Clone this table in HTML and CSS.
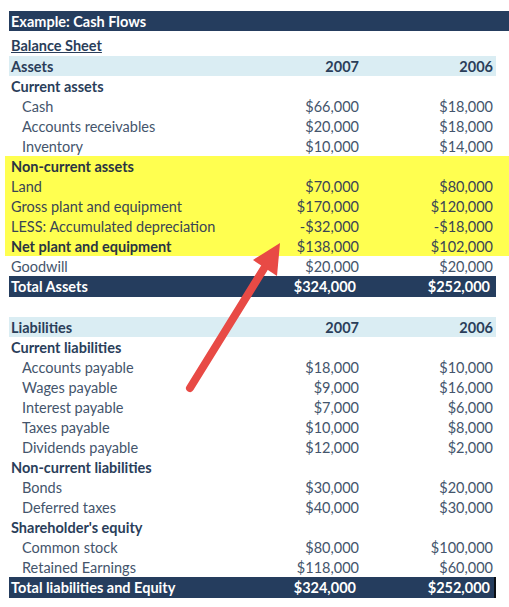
FILE: index.html
```html
<!DOCTYPE html>
<html lang="en">
<head>
    <meta charset="UTF-8">
    <title>Example: Cash Flows</title>
    <link rel="stylesheet" href="styles.css">
</head>
<body>
    <div class="sheet">
        <div class="title">Example: Cash Flows</div>
        <div class="caption">Balance Sheet</div>

        <div class="row band"><span>Assets</span><span>2007</span><span>2006</span></div>
        <div class="row head"><span>Current assets</span><span></span><span></span></div>
        <div class="row ind"><span>Cash</span><span>$66,000</span><span>$18,000</span></div>
        <div class="row ind"><span>Accounts receivables</span><span>$20,000</span><span>$18,000</span></div>
        <div class="row ind"><span>Inventory</span><span>$10,000</span><span>$14,000</span></div>

        <div class="highlight">
            <div class="row head"><span>Non-current assets</span><span></span><span></span></div>
            <div class="row"><span>Land</span><span>$70,000</span><span>$80,000</span></div>
            <div class="row"><span>Gross plant and equipment</span><span>$170,000</span><span>$120,000</span></div>
            <div class="row"><span>LESS: Accumulated depreciation</span><span>-$32,000</span><span>-$18,000</span></div>
            <div class="row head"><span>Net plant and equipment</span><span class="num">$138,000</span><span class="num">$102,000</span></div>
        </div>

        <div class="row"><span>Goodwill</span><span>$20,000</span><span>$20,000</span></div>
        <div class="row total"><span>Total Assets</span><span>$324,000</span><span>$252,000</span></div>

        <div class="row blank"></div>

        <div class="row band"><span>Liabilities</span><span>2007</span><span>2006</span></div>
        <div class="row head"><span>Current liabilities</span><span></span><span></span></div>
        <div class="row ind"><span>Accounts payable</span><span>$18,000</span><span>$10,000</span></div>
        <div class="row ind"><span>Wages payable</span><span>$9,000</span><span>$16,000</span></div>
        <div class="row ind"><span>Interest payable</span><span>$7,000</span><span>$6,000</span></div>
        <div class="row ind"><span>Taxes payable</span><span>$10,000</span><span>$8,000</span></div>
        <div class="row ind"><span>Dividends payable</span><span>$12,000</span><span>$2,000</span></div>
        <div class="row head"><span>Non-current liabilities</span><span></span><span></span></div>
        <div class="row ind"><span>Bonds</span><span>$30,000</span><span>$20,000</span></div>
        <div class="row ind"><span>Deferred taxes</span><span>$40,000</span><span>$30,000</span></div>
        <div class="row head"><span>Shareholder's equity</span><span></span><span></span></div>
        <div class="row ind"><span>Common stock</span><span>$80,000</span><span>$100,000</span></div>
        <div class="row ind"><span>Retained Earnings</span><span>$118,000</span><span>$60,000</span></div>
        <div class="row total edge"><span>Total liabilities and Equity</span><span>$324,000</span><span>$252,000</span></div>

        <!-- callout arrow pointing at the highlighted block -->
        <svg class="arrow" width="509" height="607" viewBox="0 0 509 607">
            <line x1="190" y1="388" x2="268" y2="262" stroke="#e84a45" stroke-width="8" stroke-linecap="round"/>
            <polygon points="280,243 253,260 277,276" fill="#e84a45"/>
        </svg>
    </div>
</body>
</html>
```

FILE: styles.css
```css
body {
    margin: 0;
    background-color: white;
    font-family: Lato, "Liberation Sans", sans-serif;
    font-size: 14.5px;
    color: #44556c;
}
.sheet {
    position: relative;
    width: 487px;
    padding: 11px 0 0 9px;
}
.title {
    height: 20px;
    line-height: 21px;
    margin-right: -13px;
    padding-left: 2px;
    background-color: #253d5e;
    color: white;
    font-weight: bold;
}
.caption {
    height: 25px;
    line-height: 30px;
    padding-left: 2px;
    font-weight: bold;
    color: #2a3e5a;
    text-decoration: underline;
}
.row {
    display: grid;
    grid-template-columns: 246px 104px 134px;
    height: 20px;
    line-height: 22px;
    padding-right: 3px;
}
.row span {
    height: 20px;
    text-align: right;
    white-space: nowrap;
}
.row span:first-child {
    text-align: left;
    padding-left: 2px;
}
.row.ind span:first-child {
    padding-left: 13px;
}
.band {
    background-color: #daedf3;
    font-weight: bold;
    color: #2a3e5a;
}
.head span:first-child {
    font-weight: bold;
    color: #2a3e5a;
}
.head .num {
    font-weight: normal;
}
.highlight {
    margin: 0 -13px 0 -4px;
    padding: 0 13px 0 4px;
    background-color: #ffff50;
    color: #3a4554;
}
.highlight .head span:first-child {
    color: #2a3442;
}
.total {
    height: 21px;
    background-color: #253d5e;
    color: white;
    font-weight: bold;
}
.total span:not(:first-child) {
    padding-right: 3px;
}
.total.edge {
    width: 482px;
    border-right: 2px solid #0b0f14;
}
.blank {
    height: 20px;
}
.arrow {
    position: absolute;
    left: 0;
    top: 0;
    pointer-events: none;
}
```
